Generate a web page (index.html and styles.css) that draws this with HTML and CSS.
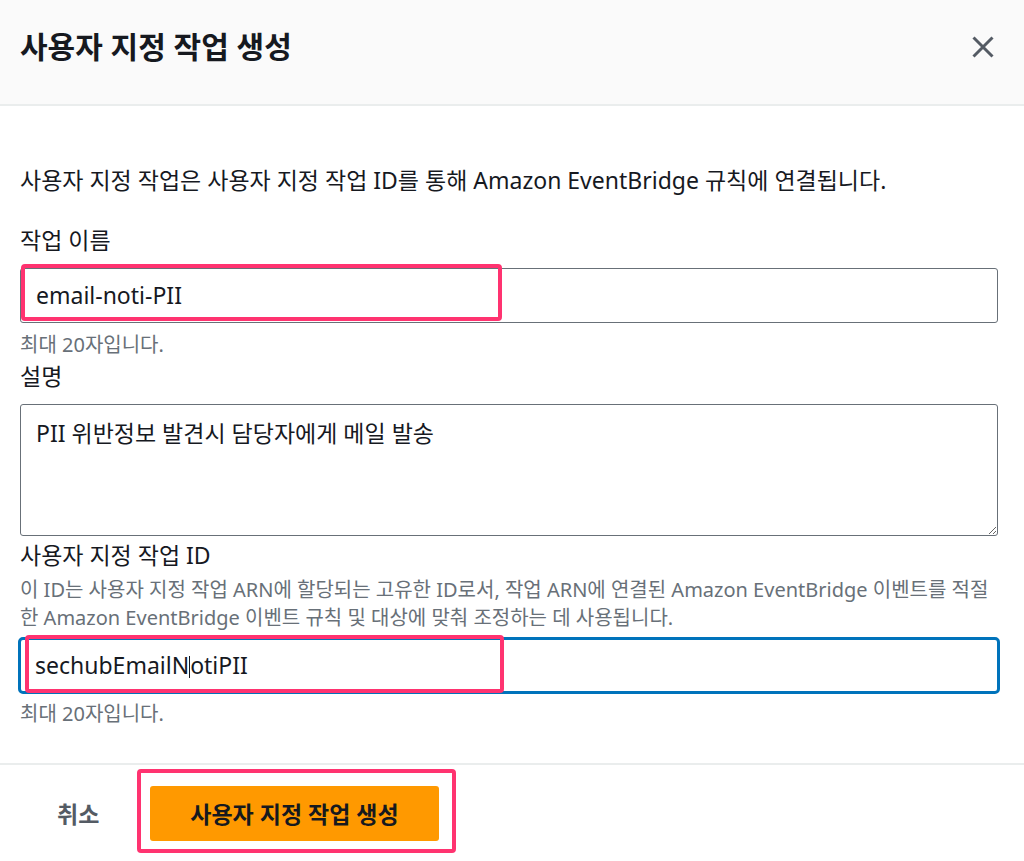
FILE: index.html
```html
<!DOCTYPE html>
<html lang="ko">
<head>
<meta charset="utf-8">
<link rel="stylesheet" href="styles.css">
</head>
<body>
<div class="modal">
  <header class="modal-header">
    <h1 class="title">사용자 지정 작업 생성</h1>
    <button class="close" aria-label="닫기">
      <svg width="22" height="22" viewBox="0 0 22 22"><path d="M1.5 1.5 L20.5 20.5 M20.5 1.5 L1.5 20.5" stroke="#545b64" stroke-width="3" fill="none"/></svg>
    </button>
  </header>
  <main class="modal-body">
    <p class="intro">사용자 지정 작업은 사용자 지정 작업 ID를 통해 Amazon EventBridge 규칙에 연결됩니다.</p>

    <div class="field field-name">
      <label class="label">작업 이름</label>
      <div class="input-wrap">
        <div class="input">email-noti-PII</div>
        <span class="mark mark-name"></span>
      </div>
      <div class="hint">최대 20자입니다.</div>
    </div>

    <div class="field field-desc">
      <label class="label">설명</label>
      <textarea class="textarea">PII 위반정보 발견시 담당자에게 메일 발송</textarea>
    </div>

    <div class="field field-id">
      <label class="label">사용자 지정 작업 ID</label>
      <div class="desc">이 ID는 사용자 지정 작업 ARN에 할당되는 고유한 ID로서, 작업 ARN에 연결된 Amazon EventBridge 이벤트를 적절한 Amazon EventBridge 이벤트 규칙 및 대상에 맞춰 조정하는 데 사용됩니다.</div>
      <div class="input-wrap">
        <div class="input input-focus">sechubEmailN<span class="caret"></span>otiPII</div>
        <span class="mark mark-id"></span>
      </div>
      <div class="hint">최대 20자입니다.</div>
    </div>
  </main>
  <footer class="modal-footer">
    <button class="cancel">취소</button>
    <div class="primary-wrap">
      <button class="primary">사용자 지정 작업 생성</button>
      <span class="mark mark-btn"></span>
    </div>
  </footer>
</div>
</body>
</html>
```
FILE: styles.css
```css
* { box-sizing: border-box; }
html, body { margin: 0; padding: 0; background: #fff; }
body {
  font-family: "Noto Sans", "Noto Sans CJK KR", sans-serif;
  color: #16191f;
  width: 1024px;
  height: 861px;
  overflow: hidden;
}
.modal { display: flex; flex-direction: column; }
.modal-header {
  height: 106px;
  background: #fafafa;
  border-bottom: 2px solid #eaeded;
  display: flex;
  align-items: center;
  justify-content: space-between;
  padding: 0 30px 10px 20px;
}
.title {
  margin: 0;
  font-size: 30px;
  line-height: 40px;
  font-weight: 700;
}
.close {
  border: 0; background: transparent; padding: 0; width: 22px; height: 22px;
  display: flex;
}
.modal-body { padding: 59px 26px 0 20px; }
.intro { margin: 0; font-size: 23px; line-height: 30px; }
.field { display: flex; flex-direction: column; }
.label { font-size: 23px; line-height: 30px; }
.field-name { margin-top: 30px; }
.field-name .label { margin-bottom: 13px; }
.input-wrap { position: relative; }
.input {
  height: 55px;
  border: 1px solid #687078;
  border-radius: 3px;
  font-size: 23px;
  line-height: 30px;
  padding: 11px 15px;
  white-space: nowrap;
}
.input-focus {
  border: 3px solid #0073bb;
  border-radius: 5px;
  height: 57px;
  margin: 0 -2px;
  padding: 10px 14px;
}
.caret { display: inline-block; width: 1px; height: 22px; background: #16191f; vertical-align: -4px; }
.hint { font-size: 20px; line-height: 24px; color: #687078; margin-top: 10px; }
.field-desc { margin-top: 4px; }
.field-desc .label { margin-bottom: 13px; }
.textarea {
  display: block;
  width: 100%;
  height: 132px;
  border: 1px solid #687078;
  border-radius: 3px;
  font-family: inherit;
  font-size: 23px;
  line-height: 30px;
  color: #16191f;
  padding: 13px 15px;
  resize: vertical;
}
.field-id { margin-top: 4px; }
.desc { font-size: 20px; line-height: 28px; color: #687078; margin-top: 6px; margin-bottom: 5px; }
.field-id .hint { margin-top: 8px; }
.mark {
  position: absolute;
  border: 4px solid #ff3370;
  border-radius: 4px;
  pointer-events: none;
}
.mark-name { left: 1px; top: -4px; width: 481px; height: 57px; }
.mark-id { left: 5px; top: -2px; width: 479px; height: 58px; }
.modal-footer {
  margin-top: 37px;
  border-top: 2px solid #eaeded;
  height: 98px;
  display: flex;
  align-items: center;
  padding: 0 0 0 57px;
}
.cancel {
  border: 0; background: transparent; padding: 0;
  font-family: inherit; font-weight: 700; font-size: 23px; color: #545b64;
  width: 93px; text-align: left;
}
.primary-wrap { position: relative; }
.primary {
  display: block;
  width: 289px; height: 55px;
  background: #ff9900;
  border: 0; border-radius: 3px;
  font-family: inherit; font-weight: 700; font-size: 23px; color: #16191f;
}
.mark-btn { left: -13px; top: -17px; width: 319px; height: 84px; }
```
